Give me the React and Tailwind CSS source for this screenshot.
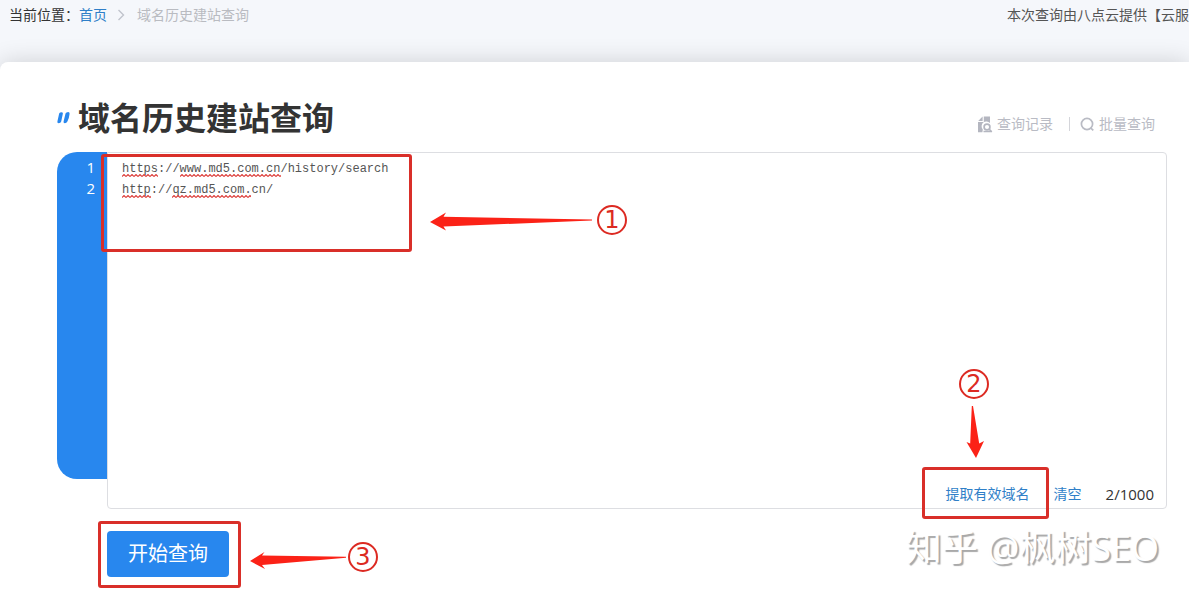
import { useState } from "react";

const INITIAL = "https://www.md5.com.cn/history/search\nhttp://qz.md5.com.cn/";

function Squiggle({ id, className }) {
  return (
    <svg className={`absolute h-[3px] ${className}`} aria-hidden="true">
      <defs>
        <pattern id={id} width="4" height="3" patternUnits="userSpaceOnUse">
          <path d="M0 2.5 L2 .5 L4 2.5" fill="none" stroke="#dc3c38" strokeWidth="1.1" />
        </pattern>
      </defs>
      <rect width="100%" height="3" fill={`url(#${id})`} />
    </svg>
  );
}

function StepNumber({ children, className }) {
  return (
    <span
      className={`absolute flex size-[30px] items-center justify-center rounded-full border-2 border-[#dc2a22] font-['DejaVu_Sans',sans-serif] text-2xl leading-none text-[#dc2a22] ${className}`}
    >
      {children}
    </span>
  );
}

function Frame({ className }) {
  return <div className={`pointer-events-none absolute rounded-[3px] border-3 border-[#d92f29] ${className}`} />;
}

function RecordIcon() {
  return (
    <svg width="16" height="17" viewBox="0 0 16 17" aria-hidden="true">
      <path d="M5.6 0.5 V5 H1.2 Z" fill="#b4b6c0" />
      <path d="M6.8 0.5 H13 V7 A4.6 4.6 0 0 0 5.8 13.4 L5.4 16.2 H1 V6 H6.8 Z" fill="#b4b6c0" />
      <circle cx="10" cy="11" r="2.9" fill="none" stroke="#b4b6c0" strokeWidth="1.7" />
      <path d="M12 13 L14.8 15.8 M6.5 15.6 H15" stroke="#b4b6c0" strokeWidth="1.5" />
    </svg>
  );
}

function SearchIcon() {
  return (
    <svg width="15" height="15" viewBox="0 0 15 15" fill="none" stroke="#b9bbc4" strokeWidth="1.7" aria-hidden="true">
      <circle cx="7" cy="7" r="5.6" />
      <path d="M10.6 10.8 L13.3 13.4" />
    </svg>
  );
}

export default function App() {
  const [value, setValue] = useState(INITIAL);
  const lines = value.split("\n");
  const count = lines.filter((line) => line.trim()).length;

  return (
    <div className="flex min-h-screen flex-col overflow-hidden bg-[#f5f7fb] font-['Open_Sans','Noto_Sans_CJK_SC',sans-serif] text-sm text-[#333]">
      <header className="flex h-[62px] items-start justify-between pt-[5px] pl-[9px] leading-5">
        <nav className="flex shrink-0 items-center whitespace-nowrap" aria-label="当前位置">
          <span>当前位置：</span>
          <a href="#home" className="text-[#2f7fc8]">首页</a>
          <svg className="mr-3 ml-2.5" width="8" height="12" viewBox="0 0 8 12" fill="none" stroke="#c0c4cc" strokeWidth="1.4" aria-hidden="true">
            <path d="M1.5 1 L6.5 6 L1.5 11" />
          </svg>
          <span className="text-[#b9bbc1]">域名历史建站查询</span>
        </nav>
        <p className="w-[182px] shrink-0 overflow-hidden whitespace-nowrap text-[#555]">本次查询由八点云提供【云服</p>
      </header>

      <main className="relative flex-1 rounded-tl-lg bg-white pr-[22px] pl-[57px] shadow-[0_0_24px_rgba(0,0,0,0.16)]">
        <div className="flex h-[90px] items-start justify-between pt-8 pr-3">
          <h1 className="flex items-center gap-[7px] text-[32px] leading-12 font-bold">
            <svg width="14" height="14" viewBox="0 0 14 14" fill="#2887ee" aria-hidden="true">
              <path d="M3.2 1.6 Q5.8 .8 5.9 2.6 L4.2 10.6 Q3.8 12.2 1.6 12.2 Q0 12.2 .4 10.4 L2 3.2 Q2.2 2 3.2 1.6 Z" />
              <path d="M9.6 1.4 Q12.8 .4 12.6 2.8 Q12.2 7 10.4 10.4 Q9.6 12.2 7.8 12.2 Q6.2 12.2 6.6 10.4 L8.4 3 Q8.6 1.8 9.6 1.4 Z" />
            </svg>
            域名历史建站查询
          </h1>
          <div className="flex items-center pt-5 leading-5 text-[#b9bbc4]">
            <a href="#records" className="flex items-center gap-1">
              <RecordIcon />
              查询记录
            </a>
            <span className="mr-2.5 ml-4 h-3.5 w-px bg-[#d4d5da]" />
            <a href="#batch" className="flex items-center gap-1">
              <SearchIcon />
              批量查询
            </a>
          </div>
        </div>

        <div className="relative flex items-start">
          <div className="h-[327px] w-[50px] rounded-l-[20px] bg-[#2887ee] pt-[5px] pr-3 text-right text-[15px] leading-[21px] text-white" aria-hidden="true">
            {lines.map((_, i) => (
              <div key={i}>{i + 1}</div>
            ))}
          </div>
          <div className="relative flex h-[357px] flex-1 flex-col rounded-r-sm rounded-bl-sm border border-[#dddee2]">
            <textarea
              aria-label="域名列表"
              spellCheck={false}
              value={value}
              onChange={(e) => setValue(e.target.value)}
              className="block w-full flex-1 resize-none bg-transparent px-3.5 pt-1.5 font-['Liberation_Mono',monospace] text-xs leading-[21px] text-[#555] outline-none"
            />
            {value === INITIAL && (
              <div className="pointer-events-none absolute inset-0">
                <Squiggle id="sq1" className="top-[21px] left-3.5 w-9" />
                <Squiggle id="sq2" className="top-[21px] left-[72px] w-[101px]" />
                <Squiggle id="sq3" className="top-[42px] left-3.5 w-[29px]" />
                <Squiggle id="sq4" className="top-[42px] left-16 w-[79px]" />
              </div>
            )}
            <div className="flex h-7 items-center justify-end pr-3 leading-5">
              <button type="button" className="mr-6 text-[#2f7fc8]">提取有效域名</button>
              <button type="button" className="mr-6 text-[#2f7fc8]" onClick={() => setValue("")}>清空</button>
              <span className="text-[15px]">{count}/1000</span>
            </div>
          </div>

          <Frame className="top-0.5 left-11 h-[98px] w-[311px]" />
          <svg className="absolute top-[60px] left-[373px]" width="162" height="19" viewBox="0 0 162 19" aria-hidden="true">
            <path d="M0 10 L16 0.5 L13.5 4.8 L162 7.4 V8.6 L13.5 14.4 L16 18.5 Z" fill="#fb2217" />
          </svg>
          <StepNumber className="top-[53px] left-[540px]">1</StepNumber>

          <Frame className="right-[118px] -bottom-2.5 h-[52px] w-[127px]" />
          <svg className="absolute right-[182px] bottom-[51px]" width="19" height="52" viewBox="0 0 19 52" aria-hidden="true">
            <path d="M5.8 0 H7 L13.2 37.5 L18 35 L10 52 L0.5 36 L4.2 37.5 Z" fill="#fb2217" />
          </svg>
          <StepNumber className="right-[178px] bottom-[110px]">2</StepNumber>
        </div>

        <div className="relative pt-[22px] pb-5 pl-[50px]">
          <button type="button" className="h-[46px] w-[122px] rounded bg-[#2887ee] text-xl text-white">开始查询</button>
          <Frame className="top-3 left-[41px] h-[67px] w-[143px]" />
          <svg className="absolute top-[43px] left-[193px]" width="96" height="18" viewBox="0 0 96 18" aria-hidden="true">
            <path d="M0 9 L14.5 0 L12 3.6 L96 4.8 V5.8 L12 13 L15 17 Z" fill="#fb2217" />
          </svg>
          <StepNumber className="top-[33px] left-[291px]">3</StepNumber>
          <p className="pointer-events-none absolute top-3 right-2 text-4xl leading-[54px] whitespace-nowrap text-white [text-shadow:2px_2px_1px_#a8a8a8]">
            知乎 @枫树SEO
          </p>
        </div>
      </main>
    </div>
  );
}
